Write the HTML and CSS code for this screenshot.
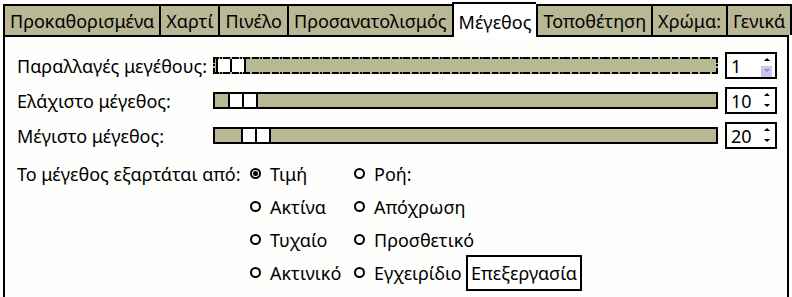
FILE: index.html
```html
<!DOCTYPE html>
<html lang="el">
<head>
    <meta charset="UTF-8">
    <title>Μέγεθος</title>
    <link rel="stylesheet" href="styles.css">
</head>
<body>
    <div class="tabs">
        <div class="tab">Προκαθορισμένα</div>
        <div class="tab">Χαρτί</div>
        <div class="tab">Πινέλο</div>
        <div class="tab">Προσανατολισμός</div>
        <div class="tab active">Μέγεθος</div>
        <div class="tab">Τοποθέτηση</div>
        <div class="tab">Χρώμα:</div>
        <div class="tab">Γενικά</div>
    </div>
    <div class="panel">
        <div class="sliders">
            <div class="label">Παραλλαγές μεγέθους:</div>
            <div class="slider focused"><div class="thumb"><span></span><span></span></div></div>
            <div class="spin"><span class="val">1</span><span class="arrows"><i class="up"></i><i class="down hot"></i></span></div>

            <div class="label">Ελάχιστο μέγεθος:</div>
            <div class="slider"><div class="thumb" style="margin-left: 13px"><span></span><span></span></div></div>
            <div class="spin"><span class="val">10</span><span class="arrows"><i class="up"></i><i class="down"></i></span></div>

            <div class="label">Μέγιστο μέγεθος:</div>
            <div class="slider"><div class="thumb" style="margin-left: 26px"><span></span><span></span></div></div>
            <div class="spin"><span class="val">20</span><span class="arrows"><i class="up"></i><i class="down"></i></span></div>
        </div>

        <div class="depends">
            <div class="label">Το μέγεθος εξαρτάται από:</div>
            <div class="radio"><b class="dot on"></b>Τιμή</div>
            <div class="radio"><b class="dot"></b>Ροή:</div>
            <div></div>

            <div></div>
            <div class="radio"><b class="dot"></b>Ακτίνα</div>
            <div class="radio"><b class="dot"></b>Απόχρωση</div>
            <div></div>

            <div></div>
            <div class="radio"><b class="dot"></b>Τυχαίο</div>
            <div class="radio"><b class="dot"></b>Προσθετικό</div>
            <div></div>

            <div></div>
            <div class="radio"><b class="dot"></b>Ακτινικό</div>
            <div class="radio"><b class="dot"></b>Εγχειρίδιο</div>
            <div><button>Επεξεργασία</button></div>
        </div>
    </div>
</body>
</html>
```

FILE: styles.css
```css
body {
    margin: 0;
    padding: 1px 3px 0 3px;
    background: #fefefc;
    font-family: "Noto Sans", sans-serif;
    font-size: 18px;
    color: #000;
    white-space: nowrap;
}

.tabs {
    display: flex;
    align-items: flex-end;
    height: 34px;
}

.tab {
    background: #b8b894;
    border: 2px solid #000;
    border-right: none;
    border-bottom: none;
    height: 29px;
    line-height: 30px;
    padding: 0 5px;
}

.tab:last-child {
    border-right: 2px solid #000;
    flex: 1;
}

.tab.active {
    background: #fff;
    height: 33px;
    line-height: 36px;
    margin-bottom: -2px;
    position: relative;
    z-index: 1;
}

.tab.active + .tab {
    border-left: 2px solid #000;
}

.panel {
    border: 2px solid #000;
    height: 255px;
    padding: 15px 10px 0 12px;
}

.sliders {
    display: grid;
    grid-template-columns: 189px 505px 52px;
    column-gap: 7px;
    row-gap: 8px;
    align-items: center;
}

.slider {
    height: 13px;
    background: #b8b894;
    border: 2px solid #000;
    display: flex;
    align-items: stretch;
}

.slider.focused {
    border: 2px dotted #000;
    outline: 2px dashed #000;
    outline-offset: -2px;
}

.thumb {
    display: flex;
    border: 2px solid #000;
    border-top: none;
    border-bottom: none;
    margin-left: 1px;
}

.thumb span {
    width: 12px;
    background: #fff;
}

.thumb span + span {
    border-left: 2px solid #000;
}

.spin {
    height: 23px;
    border: 2px solid #000;
    background: #fff;
    display: flex;
    align-items: center;
    justify-content: space-between;
    padding-left: 4px;
    font-size: 18px;
}

.arrows {
    display: flex;
    flex-direction: column;
    width: 11px;
    height: 23px;
    margin-right: 3px;
}

.arrows i {
    flex: 1;
    position: relative;
}

.arrows i::after {
    content: "";
    position: absolute;
    left: 3px;
    border-left: 3px solid transparent;
    border-right: 3px solid transparent;
}

.arrows .up::after {
    top: 4px;
    border-bottom: 3px solid #000;
}

.arrows .down::after {
    top: 3px;
    border-top: 3px solid #000;
}

.arrows .hot {
    background: #c6c6f2;
}

.arrows .hot::after {
    border-top-color: #9090a8;
}

.depends {
    margin-top: 8px;
    display: grid;
    grid-template-columns: 233px 104px 112px 1fr;
    grid-auto-rows: 33px;
    align-items: center;
}

.radio {
    display: flex;
    align-items: center;
}

.dot {
    flex: none;
    width: 7px;
    height: 7px;
    border: 2px solid #000;
    border-radius: 50%;
    margin-right: 9px;
    position: relative;
}

.dot.on::after {
    content: "";
    position: absolute;
    left: 1px;
    top: 1px;
    width: 5px;
    height: 5px;
    border-radius: 50%;
    background: #000;
}

button {
    font-family: inherit;
    font-size: 18px;
    background: #fff;
    border: 2px solid #000;
    padding: 4px 3px;
    margin-top: 1px;
    color: #000;
}
```
